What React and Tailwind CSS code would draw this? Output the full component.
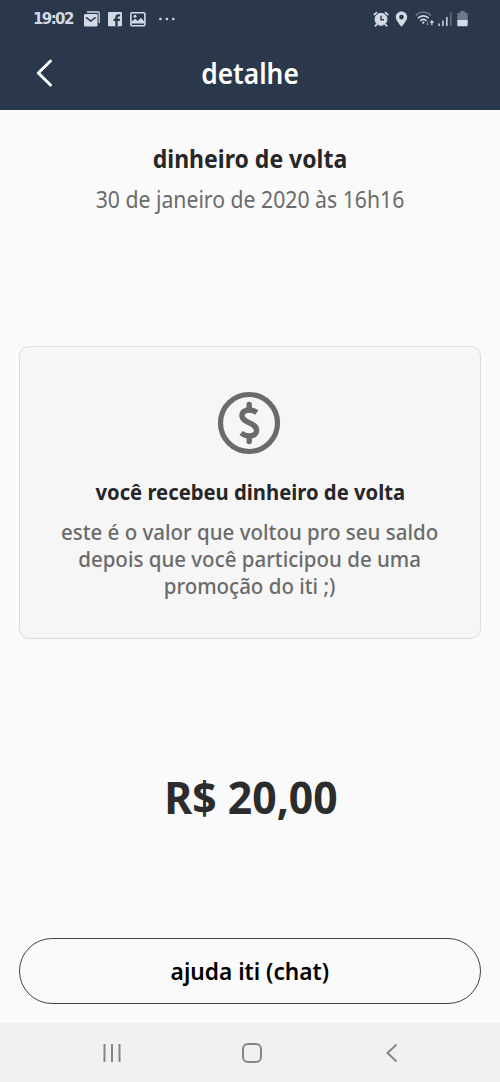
function StatusBar() {
  return (
    <div className="flex h-[38px] items-center justify-between pl-[33px] pr-[32px] text-[#d3dae5]">
      <div className="flex items-center">
        <span className="w-[43px] whitespace-nowrap font-['DejaVu_Sans',sans-serif] text-[15px] font-bold leading-none tracking-[-1.6px]">
          19:02
        </span>
        <svg className="ml-[8px] h-4 w-4" viewBox="0 0 16 16" fill="none">
          <path d="M3 1h11.2q1 0 1 1v10" stroke="currentColor" strokeWidth="1.3" />
          <rect x="0" y="3" width="13.5" height="12.5" rx="1.3" fill="currentColor" />
          <path d="M2 6.3l4.8 3.8 4.8-3.8" stroke="#2b384b" strokeWidth="1.5" />
        </svg>
        <svg className="ml-[8px] h-4 w-[14px]" viewBox="0 0 14 16">
          <rect y="1" width="14" height="14.2" rx="1" fill="currentColor" />
          <path d="M7.3 15.2V10H5.5V7.8h1.8V6.3c0-2 1-3 3-3h1.9v2.2h-1.3c-.9 0-1.2.3-1.2 1v1.3h2.4L11.8 10H9.7v5.2z" fill="#2b384b" />
        </svg>
        <svg className="ml-[8px] h-4 w-[16px]" viewBox="0 0 16 16">
          <rect x=".9" y="1.8" width="14" height="13" rx="1" fill="none" stroke="currentColor" strokeWidth="1.6" />
          <path d="M1.500 10.500l3.800-2.800 2.400 2.300L11 6.800l3.500 4V12.500H1.500z" fill="currentColor" />
          <circle cx="5" cy="5.2" r="1.5" fill="currentColor" />
        </svg>
        <svg className="ml-[12px] h-4 w-[18px]" viewBox="0 0 18 16" fill="currentColor">
          <circle cx="2.4" cy="8" r="1.3" />
          <circle cx="8.9" cy="8" r="1.3" />
          <circle cx="15.3" cy="8" r="1.3" />
        </svg>
      </div>
      <div className="flex items-center">
        <svg className="h-4 w-4" viewBox="0 0 16 16" fill="none" stroke="currentColor">
          <circle cx="8" cy="8.3" r="6" fill="currentColor" />
          <path d="M.8 4.2L4 1.2M15.2 4.2L12 1.2M4 13l-2 2.3M12 13l2 2.3" strokeWidth="1.8" />
          <path d="M8 4.7v4h3" stroke="#2b384b" strokeWidth="1.4" />
        </svg>
        <svg className="ml-[6px] h-4 w-[13px]" viewBox="0 0 13 16">
          <path
            d="M6.5.4C3.1.4.8 2.9.8 6c0 4 5.7 9.7 5.7 9.7S12.2 10 12.2 6C12.2 2.9 9.9.4 6.5.4zm0 3.400a2.300 2.300 0 110 4.600 2.300 2.300 0 010-4.600z"
            fill="currentColor"
          />
        </svg>
        <svg className="ml-[7px] h-4 w-[19px]" viewBox="0 0 19 16" fill="none" stroke="currentColor">
          <path d="M.8 4.7c4.2-4.7 10.700-4.700 15 0" strokeWidth="1.3" opacity=".45" />
          <path d="M2.9 7.3c3.100-3.300 7.700-3.300 10.800 0M5.200 9.800c1.900-1.800 4.300-1.800 6.200 0" strokeWidth="1.6" />
          <circle cx="8.3" cy="11.7" r="1.1" fill="currentColor" stroke="none" />
          <path d="M12.500 10v4m-1.300-1.400l1.300 1.400 1.300-1.400" opacity=".4" />
          <path d="M16.900 14.200V9.800M15.300 11.600l1.600-1.800 1.600 1.800" strokeWidth="1.2" />
        </svg>
        <svg className="ml-[4px] h-4 w-[14px]" viewBox="0 0 14 16" fill="currentColor">
          <rect x=".3" y="12.5" width="1.5" height="2.5" />
          <rect x="4.2" y="9.5" width="1.5" height="5.5" />
          <rect x="8.1" y="6" width="1.5" height="9" />
          <rect x="12" y="1.5" width="1.5" height="13.5" opacity=".35" />
        </svg>
        <svg className="ml-[5px] h-4 w-[11px]" viewBox="0 0 11 16" fill="currentColor">
          <path d="M3.200 0h4.600v2H10q.7 0 .7.8V9H.3V2.800Q.3 2 1 2h2.200z" opacity=".4" />
          <path d="M.3 9h10.400v5.400q0 .8-.8.8H1.100q-.8 0-.8-.8z" />
        </svg>
      </div>
    </div>
  )
}

function Header() {
  return (
    <header className="h-[110px] bg-[#2b384b]">
      <StatusBar />
      <div className="grid h-[70px] grid-cols-[100px_1fr_100px] items-center">
        <svg
          className="ml-[35px] h-[30px] w-[20px]"
          viewBox="0 0 20 30"
          fill="none"
          stroke="#fff"
          strokeWidth="3"
          strokeLinecap="round"
          strokeLinejoin="round"
        >
          <path d="M15.500 3L3.300 15l12.200 12" />
        </svg>
        <h1 className="scale-x-[0.94] text-center text-[28px] font-semibold leading-[36px] text-white">detalhe</h1>
      </div>
    </header>
  )
}

function CoinIcon() {
  return (
    <svg className="mt-[44px] mr-[2px] h-[64px] w-[64px]" viewBox="0 0 64 64" fill="none" stroke="#6b6b6b">
      <circle cx="32" cy="32" r="28.5" strokeWidth="5.2" />
      <path
        d="M39.8 21.500c-2.400-1.800-5-2.500-7.600-2.500-4.500 0-7.200 2.100-7.200 5.600 0 7.700 14.600 6.600 14.600 14.700 0 3.600-3 5.700-7.200 5.700-3.200 0-5.800-1-8.300-3"
        strokeWidth="5.4"
      />
      <path d="M32.200 13.500v5M32.200 45.500v5" strokeWidth="5.4" strokeLinecap="round" />
    </svg>
  )
}

function NavBar() {
  return (
    <nav className="flex h-[59px] items-center bg-[#f1f1f1] pl-[102px] text-[#858585]">
      <svg className="h-[22px] w-[20px]" viewBox="0 0 20 22" fill="none" stroke="currentColor" strokeWidth="2">
        <path d="M2.500 2v18M10 2v18M17.500 2v18" />
      </svg>
      <svg className="ml-[119px] h-[22px] w-[22px]" viewBox="0 0 22 22" fill="none" stroke="currentColor" strokeWidth="2">
        <rect x="2" y="2" width="18" height="18" rx="5" />
      </svg>
      <svg className="ml-[121px] h-[22px] w-[16px]" viewBox="0 0 16 22" fill="none" stroke="currentColor" strokeWidth="2">
        <path d="M12.500 2.500L3.500 11l9 8.500" />
      </svg>
    </nav>
  )
}

export default function App() {
  return (
    <div className="flex h-[1082px] w-[500px] flex-col overflow-hidden bg-[#fafafa] font-['Noto_Sans',sans-serif]">
      <Header />
      <main className="flex flex-1 flex-col px-[19px] text-center">
        <h2 className="mt-[32px] scale-x-[0.92] text-[25px] font-bold leading-[32px] text-[#272727]">
          dinheiro de volta
        </h2>
        <p className="mt-[10px] scale-x-[0.922] text-[23px] leading-[30px] text-[#6b6b6b]">
          30 de janeiro de 2020 às 16h16
        </p>
        <section className="mt-[132px] flex h-[293px] flex-col items-center rounded-[10px] border border-[#dcdcdc] bg-[#f6f6f6]">
          <CoinIcon />
          <h3 className="mt-[21px] scale-x-[0.92] whitespace-nowrap text-[22px] font-bold leading-[30px] text-[#272727]">
            você recebeu dinheiro de volta
          </h3>
          <p className="mt-[12px] scale-x-[0.931] whitespace-nowrap text-[22px] font-medium leading-[27px] text-[#6b6b6b]">
            este é o valor que voltou pro seu saldo
            <br />
            depois que você participou de uma
            <br />
            promoção do iti ;)
          </p>
        </section>
        <p className="mt-[128px] ml-[2px] scale-x-[0.97] text-[44px] font-bold leading-[60px] text-[#2c2c2c]">R$ 20,00</p>
        <button className="mt-[111px] h-[66px] rounded-full border-[1.5px] border-[#444] text-[24px] font-semibold text-black">
          <span className="inline-block scale-x-[0.945]">ajuda iti (chat)</span>
        </button>
      </main>
      <NavBar />
    </div>
  )
}
